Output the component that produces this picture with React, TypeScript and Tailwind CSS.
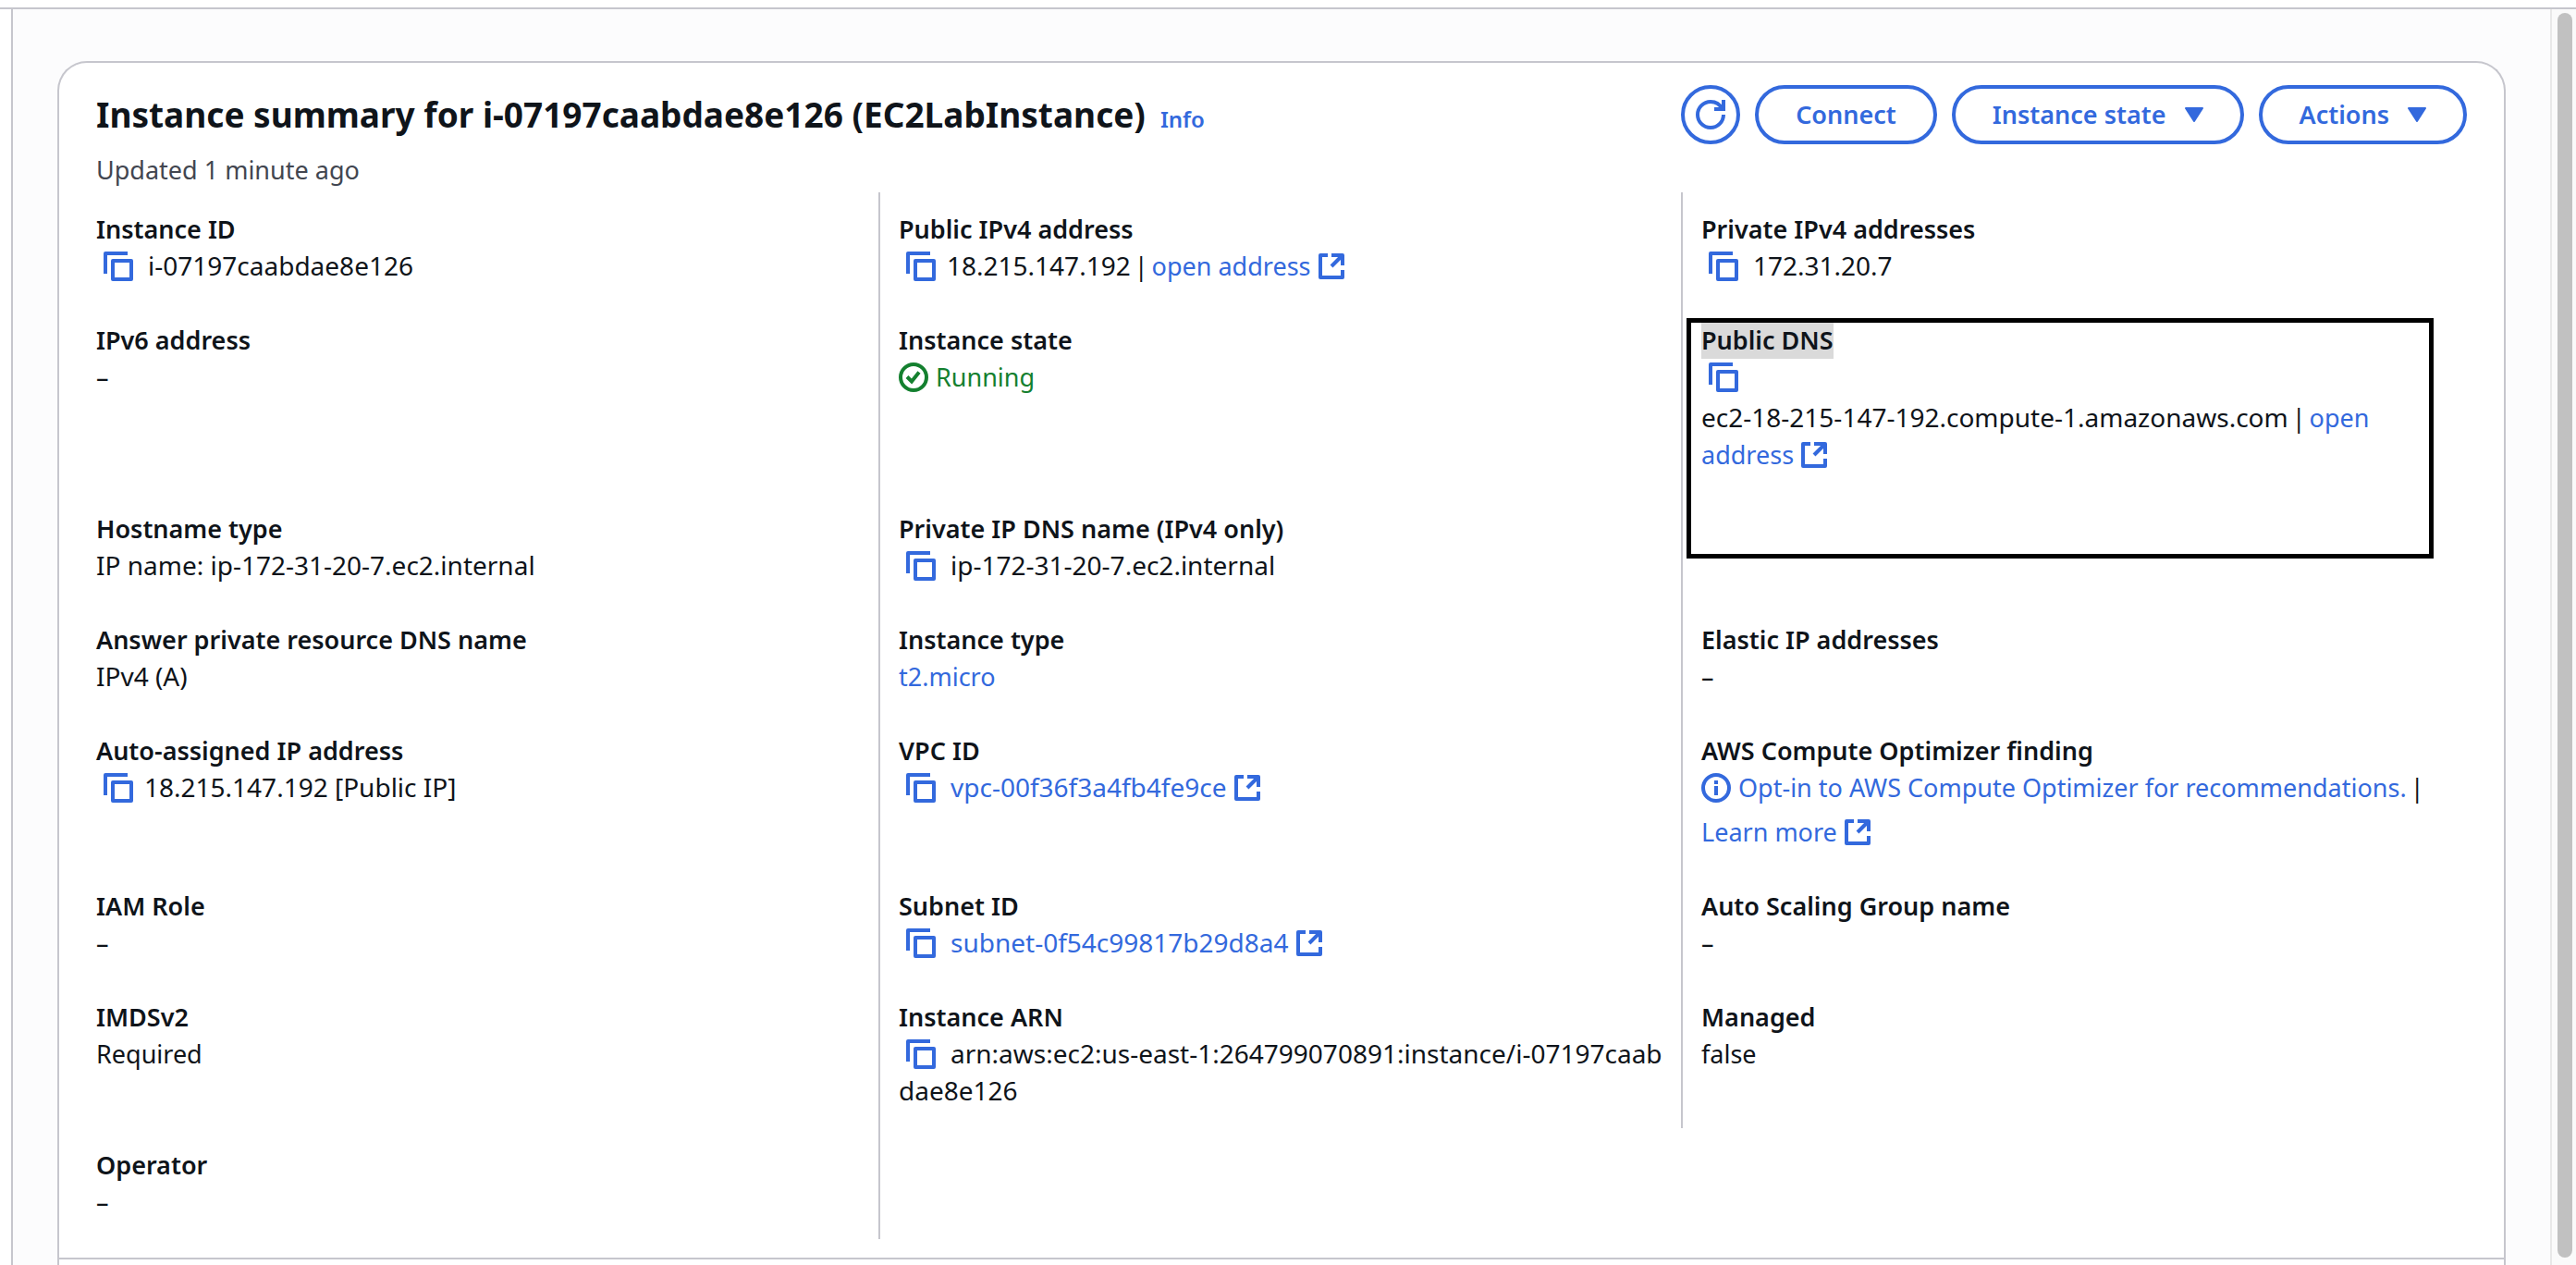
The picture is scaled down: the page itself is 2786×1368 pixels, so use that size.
import type { ReactNode } from "react";

const ICON = {
  fill: "none",
  stroke: "currentColor",
  strokeWidth: 4,
  "aria-hidden": true,
} as const;

function CopyButton({ label, tight }: { label: string; tight?: boolean }) {
  return (
    <button
      type="button"
      aria-label={`Copy ${label}`}
      className={
        tight
          ? "mr-3 ml-2 inline-block h-8 w-8 align-[-6px] text-[#3369dd]"
          : "mr-4 ml-2 inline-block h-8 w-8 align-[-6px] text-[#3369dd]"
      }
    >
      <svg {...ICON} viewBox="0 0 32 32" strokeLinejoin="round" className="h-8 w-8">
        <path d="M2 24V2h24" />
        <path d="M10 10h20v20H10z" />
      </svg>
    </button>
  );
}

function ExternalIcon() {
  return (
    <svg {...ICON} viewBox="0 0 28 28" strokeLinejoin="round" className="ml-2 inline-block h-7 w-7 align-[-4px]">
      <path d="M10 2H2v24h24v-8" />
      <path d="M14 2h12v11" />
      <path d="M26 2 14 14" />
    </svg>
  );
}

function CheckIcon() {
  return (
    <svg {...ICON} viewBox="0 0 32 32" className="mr-2 inline-block h-8 w-8 align-[-6px]">
      <circle cx="16" cy="16" r="14" />
      <path d="m9 15.500 5 5 8-10" />
    </svg>
  );
}

function InfoIcon() {
  return (
    <svg {...ICON} viewBox="0 0 32 32" className="mr-2 inline-block h-8 w-8 align-[-6px]">
      <circle cx="16" cy="16" r="14" />
      <path d="M16 8v4M16 14v10" />
    </svg>
  );
}

function RefreshIcon() {
  return (
    <svg {...ICON} viewBox="0 0 32 32" className="h-8 w-8">
      <path d="M30 16c0 7.740-6.260 14-14 14S2 23.740 2 16 8.260 2 16 2c5.580 0 10.400 3.260 12.660 8" />
      <path d="M30 0v10H20" />
    </svg>
  );
}

function Caret() {
  return (
    <svg
      viewBox="0 0 20 16"
      className="ml-5 h-4 w-5"
      fill="currentColor"
      stroke="currentColor"
      strokeWidth="2"
      strokeLinejoin="round"
      aria-hidden="true"
    >
      <path d="M1 1h18l-9 14z" />
    </svg>
  );
}

function TextLink({ children }: { children: ReactNode }) {
  return (
    <a href="#" className="text-[#3369dd]">
      {children}
    </a>
  );
}

/* Identifiers and addresses are set one pixel larger than prose. */
function Data({ children }: { children: ReactNode }) {
  return <span className="text-[28px] leading-none">{children}</span>;
}

function Bar() {
  return <span className="mx-1">|</span>;
}

function Field({
  label,
  column,
  marked,
  children,
}: {
  label: string;
  column: 1 | 2 | 3;
  marked?: boolean;
  children: ReactNode;
}) {
  return (
    <div className={column === 3 ? "relative p-5" : "border-r-2 border-[#c6c6cd] p-5"}>
      <dt className={marked ? "w-fit bg-[#dadada] font-semibold" : "font-semibold"}>{label}</dt>
      <dd>{children}</dd>
      {marked && (
        <div className="pointer-events-none absolute top-4 right-14 left-1 z-10 h-[260px] border-5 border-black" />
      )}
    </div>
  );
}

const PILL = "flex h-16 items-center rounded-full border-4 border-[#3369dd] px-10 font-semibold";

export default function App() {
  return (
    <div className="flex h-screen flex-col overflow-hidden bg-white font-['Noto_Sans',sans-serif] text-[27px] leading-10 text-[#0f141a]">
      <div className="h-2 shrink-0" />
      <div className="flex min-h-0 grow border-t-2 border-[#c6c6cd]">
        <div className="w-3 shrink-0" />
        <main className="flex min-w-0 grow flex-col overflow-hidden border-l-2 border-[#c6c6cd] bg-[#fcfcfd] px-12 pt-14">
          <section className="shrink-0 rounded-t-[32px] border-2 border-b-0 border-[#c6c6cd] bg-white">
            <header className="flex items-start justify-between px-10 pt-6 pb-1">
              <div>
                <h1 className="pt-2 text-[37px] leading-12 font-bold">
                  Instance summary for i-07197caabdae8e126 (EC2LabInstance)
                  <a href="#" className="ml-4 text-[24px] leading-none font-semibold text-[#3369dd]">
                    Info
                  </a>
                </h1>
                <p className="mt-4 text-[#424650]">Updated 1 minute ago</p>
              </div>
              <div className="flex gap-4 text-[#3369dd]">
                <button
                  type="button"
                  aria-label="Refresh"
                  className="flex h-16 w-16 items-center justify-center rounded-full border-4 border-[#3369dd]"
                >
                  <RefreshIcon />
                </button>
                <button type="button" className={PILL}>
                  Connect
                </button>
                <button type="button" className={PILL}>
                  Instance state
                  <Caret />
                </button>
                <button type="button" className={PILL}>
                  Actions
                  <Caret />
                </button>
              </div>
            </header>

            <dl className="grid grid-cols-3 px-5 pb-5">
              <Field column={1} label="Instance ID">
                <CopyButton label="Instance ID" />
                <Data>i-07197caabdae8e126</Data>
              </Field>
              <Field column={2} label="Public IPv4 address">
                <CopyButton tight label="Public IPv4 address" />
                <Data>18.215.147.192</Data>
                <Bar />
                <TextLink>
                  open address
                  <ExternalIcon />
                </TextLink>
              </Field>
              <Field column={3} label="Private IPv4 addresses">
                <CopyButton label="Private IPv4 addresses" />
                <Data>172.31.20.7</Data>
              </Field>

              <Field column={1} label="IPv6 address">–</Field>
              <Field column={2} label="Instance state">
                <span className="text-[#14802f]">
                  <CheckIcon />
                  Running
                </span>
              </Field>
              <Field column={3} marked label="Public DNS">
                <div className="h-11">
                  <CopyButton label="Public DNS" />
                </div>
                <Data>ec2-18-215-147-192.compute-1.amazonaws.com</Data>
                <Bar />
                <TextLink>
                  open{" "}
                  <span className="whitespace-nowrap">
                    address
                    <ExternalIcon />
                  </span>
                </TextLink>
              </Field>

              <Field column={1} label="Hostname type">
                <Data>IP name: ip-172-31-20-7.ec2.internal</Data>
              </Field>
              <Field column={2} label="Private IP DNS name (IPv4 only)">
                <CopyButton label="Private IP DNS name" />
                <Data>ip-172-31-20-7.ec2.internal</Data>
              </Field>
              <div />

              <Field column={1} label="Answer private resource DNS name">
                <Data>IPv4 (A)</Data>
              </Field>
              <Field column={2} label="Instance type">
                <TextLink>t2.micro</TextLink>
              </Field>
              <Field column={3} label="Elastic IP addresses">–</Field>

              <Field column={1} label="Auto-assigned IP address">
                <CopyButton tight label="Auto-assigned IP address" />
                <Data>18.215.147.192 [Public IP]</Data>
              </Field>
              <Field column={2} label="VPC ID">
                <CopyButton label="VPC ID" />
                <TextLink>
                  <Data>vpc-00f36f3a4fb4fe9ce</Data>
                  <ExternalIcon />
                </TextLink>
              </Field>
              <Field column={3} label="AWS Compute Optimizer finding">
                <TextLink>
                  <InfoIcon />
                  Opt-in to AWS Compute Optimizer for recommendations.
                </TextLink>
                <Bar />
                <div className="mt-2">
                  <TextLink>
                    Learn more
                    <ExternalIcon />
                  </TextLink>
                </div>
              </Field>

              <Field column={1} label="IAM Role">–</Field>
              <Field column={2} label="Subnet ID">
                <CopyButton label="Subnet ID" />
                <TextLink>
                  <Data>subnet-0f54c99817b29d8a4</Data>
                  <ExternalIcon />
                </TextLink>
              </Field>
              <Field column={3} label="Auto Scaling Group name">–</Field>

              <Field column={1} label="IMDSv2">Required</Field>
              <Field column={2} label="Instance ARN">
                <CopyButton label="Instance ARN" />
                <span className="break-all">
                  <Data>arn:aws:ec2:us-east-1:264799070891:instance/i-07197caabdae8e126</Data>
                </span>
              </Field>
              <Field column={3} label="Managed">false</Field>

              <Field column={1} label="Operator">–</Field>
            </dl>
          </section>
          <div className="grow border-2 border-b-0 border-[#c6c6cd] bg-white" />
        </main>
        <div className="flex w-7 shrink-0 flex-col border-l-2 border-[#e8e8e8] bg-[#fafafa] pt-1 pr-1 pb-2 pl-1.5">
          <div className="w-4 grow rounded-full bg-[#c1c1c1]" />
        </div>
      </div>
    </div>
  );
}
